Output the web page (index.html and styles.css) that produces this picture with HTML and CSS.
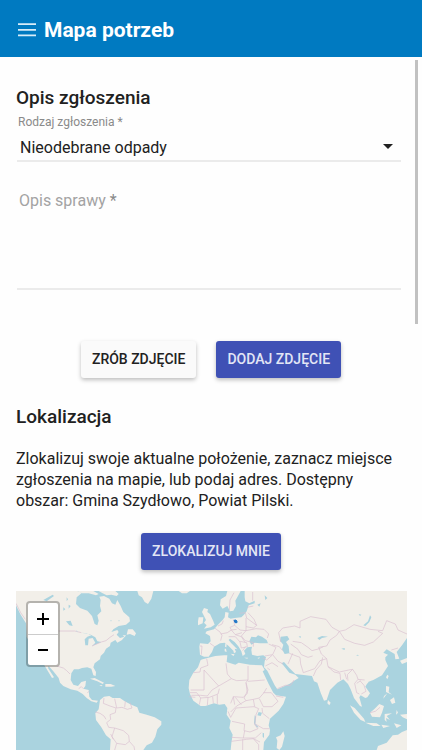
FILE: index.html
```html
<!DOCTYPE html>
<html lang="pl">
<head>
<meta charset="utf-8">
<meta name="viewport" content="width=device-width, initial-scale=1">
<title>Mapa potrzeb</title>
<link rel="stylesheet" href="styles.css">
</head>
<body>
<header class="topbar">
  <button class="menu" type="button" aria-label="Menu">
    <svg viewBox="0 0 18 14" width="18" height="14"><path d="M0 1.2H18M0 6.8H18M0 12.4H18"/></svg>
  </button>
  <div class="brand">Mapa potrzeb</div>
</header>
<div class="viewport">
<main class="content">
  <h2>Opis zgłoszenia</h2>
  <div class="field">
    <label class="float-label" for="kind">Rodzaj zgłoszenia <span class="star">*</span></label>
    <div class="select-wrap">
      <select id="kind"><option>Nieodebrane odpady</option></select>
      <svg class="caret" viewBox="0 0 10 5" width="10" height="5"><path d="M0 0H10L5 5Z"/></svg>
    </div>
  </div>
  <div class="field area">
    <textarea id="desc"></textarea>
    <label class="area-label" for="desc">Opis sprawy <span class="star">*</span></label>
  </div>
  <div class="actions pair">
    <button class="btn" type="button">ZRÓB ZDJĘCIE</button>
    <button class="btn primary" type="button">DODAJ ZDJĘCIE</button>
  </div>
  <h2>Lokalizacja</h2>
  <p>Zlokalizuj swoje aktualne położenie, zaznacz miejsce zgłoszenia na mapie, lub podaj adres. Dostępny obszar: Gmina Szydłowo, Powiat Pilski.</p>
  <div class="actions">
    <button class="btn primary" type="button">ZLOKALIZUJ MNIE</button>
  </div>
  <div class="map">
    <svg class="world" viewBox="48 33 1173 477" preserveAspectRatio="xMinYMin slice" aria-hidden="true">
      <g class="land">
        <!-- North and Central America -->
        <path d="M48 33H232L246 38L230 52L228 72L240 84L262 92L276 108L284 132L292 136L296 122L292 106L304 94L300 78L302 60L298 50L312 48L328 56L336 70L346 74L352 60L362 78L370 96L388 112L390 124L378 134L356 138L340 148L334 156L352 150L356 156L350 164L360 174L374 170L366 180L352 188L346 180L332 188L330 198L318 206L312 218L302 228L300 238L284 250L280 262L288 276L287 288L280 286L274 266L262 262L246 264L236 268L222 268L214 280L212 300L220 314L234 318L244 306L258 302L256 318L250 326L266 330L268 350L276 360L294 362L290 368L274 364L260 354L248 342L232 332L212 328L190 318L180 308L176 294L160 274L146 258L144 264L162 292L156 294L138 264L124 240L100 210L80 170L78 130L62 104L48 76Z"/>
        <path d="M232 33H280L296 42L288 46L266 40L246 40ZM296 33H346L356 42L350 48L334 44L320 46L308 40ZM384 148L398 148L408 160L404 168L390 162L380 164ZM368 166L378 166L374 172Z"/>
        <path d="M412 33H460L454 56L444 72L434 66L426 52L416 46ZM536 33H570L560 40L546 40Z"/>
        <path d="M270 296L284 294L300 302L312 308L308 312L292 304ZM316 312L332 312L346 318L334 320L316 320ZM298 315L308 316L304 319Z"/>
        <!-- South America -->
        <path d="M300 360L312 350L328 348L338 354L360 354L374 364L394 374L412 382L418 398L440 404L464 412L484 424L484 434L472 448L466 470L456 488L440 496L430 510H330L332 478L318 466L304 442L288 420L286 400L296 388Z"/>
        <!-- Africa -->
        <path d="M608 238L622 234L646 228L672 226L682 226L680 246L706 254L716 248L750 254L786 256L794 270L788 274L806 312L820 338L828 346L858 350L850 372L836 392L810 416L806 436L810 450L808 464L792 486L790 510H692L694 490L698 464L688 444L692 422L680 404L682 384L674 372L658 374L642 370L616 378L602 378L580 362L570 342L566 324L568 300L580 278L594 262L602 240Z"/>
        <path d="M850 454L854 468L846 500L838 510L830 504L832 482L828 472L842 466Z"/>
        <!-- Europe and Asia -->
        <path d="M682 33L678 48L662 58L660 76L668 86L682 78L690 94L700 92L708 78L706 62L716 44L722 33H734L734 52L736 64L748 70L764 62L764 70L746 76L740 94L732 104L724 112L704 114L692 116L684 112L686 98L676 96L674 112L668 120L656 132L642 148L620 154L616 160L630 168L632 184L624 192L600 190L598 200L600 224L612 230L626 230L636 216L642 200L660 190L674 188L686 198L700 212L702 220L708 216L704 206L712 208L694 190L686 180L690 176L704 186L716 200L724 214L728 228L736 222L732 212L742 202L756 200L754 210L756 224L772 228L790 226L798 232L794 244L792 262L802 272L810 288L824 316L832 328L846 322L868 312L886 300L896 294L886 284L868 278L850 256L844 250L852 246L868 264L886 282L936 288L942 304L952 308L962 338L972 362L980 360L990 330L1012 308L1030 298L1044 312L1052 328L1062 354L1080 378L1086 380L1078 352L1082 346L1096 354L1102 352L1110 340L1096 320L1104 306L1120 300L1146 286L1164 258L1156 240L1156 232L1164 224L1150 218L1160 208L1170 214L1184 222L1186 238L1198 236L1190 216L1206 196L1221 174V33Z"/>
        <path d="M612 84L624 88L622 96L630 102L640 124L644 134L632 142L612 146L620 136L612 128L618 120L606 96ZM596 112L610 112L608 130L594 136L594 124Z"/>
        <path d="M674 206L678 206L680 216L674 214ZM676 190L680 192L679 202L675 200ZM692 221L704 223L700 228ZM732 233L744 233L742 236ZM772 234L780 232L777 236Z"/>
        <path d="M984 360L992 368L988 376L982 370ZM1162 284L1166 288L1162 298L1158 292ZM1098 304L1106 306L1100 312Z"/>
        <path d="M1050 376L1064 384L1092 416L1096 426L1082 420L1062 398ZM1096 428L1130 430L1142 438L1120 438ZM1144 434L1170 438L1150 444ZM1110 398L1124 386L1138 372L1152 378L1146 398L1140 412L1116 410ZM1154 402L1176 400L1160 408L1170 420L1158 414L1160 426L1154 420ZM1158 318L1168 320L1166 336L1176 344L1158 336ZM1170 360L1182 352L1186 368L1176 372ZM1200 404L1221 402V418L1208 412Z"/>
        <path d="M1130 510L1134 498L1160 488L1178 466L1194 464L1206 456L1221 450V510ZM1200 242L1221 234V246L1206 252ZM1182 430L1204 436L1190 444ZM1162 340L1150 356L1152 348ZM1190 390L1194 398L1188 404Z"/>
      </g>
      <g class="water">
        <path d="M244 158L260 160L274 166L262 170L254 178L256 196L264 196L266 176L278 174L286 188L276 198L304 186L292 184L286 172L268 162ZM198 124L212 122L218 138L208 136ZM130 60L158 44L162 48L140 64ZM206 74L212 78L206 86ZM190 82L196 88L190 92ZM200 52L204 58L200 64Z"/>
        <path d="M754 170L768 172L774 166L786 170L800 180L804 190L780 190L764 188L754 194L748 184ZM842 170L862 168L868 178L858 186L866 198L868 220L854 222L846 208L850 194L840 182ZM772 74L782 70L778 80ZM794 46L802 54L796 60ZM776 396L786 398L782 408L772 406ZM764 406L768 410L766 432L776 442L770 442L762 430ZM788 458L792 460L792 474L788 470Z"/>
        <path d="M1090 136L1104 124L1110 106L1114 112L1108 126L1096 138ZM952 174L966 168L984 170L966 174L958 180ZM1024 206L1034 204L1034 210ZM1068 226L1074 224L1076 228ZM896 170L902 168L902 174ZM1076 102L1084 104L1080 108Z"/>
      </g>
      <g class="borders">
        <path d="M176 153H224L244 158M276 198L304 186L318 182L330 172L342 164M48 70L62 98L76 118M170 258L190 264L200 272L210 282M236 326L244 320L250 326M262 338L268 334M312 354L310 370L330 378L348 384L346 398L330 404L332 418L320 428L326 442L344 444M286 396L300 400L312 408L318 418M344 356L350 384L366 382L382 388L396 384L390 368M376 364L374 382M344 444L336 470L350 490L344 510M344 444L370 452L386 466L388 484L376 494L350 490M388 484L402 500L404 510M332 462L340 478"/>
        <path d="M620 236L624 256L602 264L600 276L580 278M612 270L612 330L572 330M612 270L656 318L636 330L622 348L602 346L574 346M656 318L694 296L682 282L678 250M694 296L710 302L744 300V258M744 300L738 308L742 340L730 352L700 350L692 370M744 304L794 300M738 308L744 330L732 354L738 362L760 358L778 354L792 338L800 324M790 338L814 338L834 364L816 380L790 380L778 356M570 338H590L602 354L628 352L654 342L658 326M602 354L598 374M624 352L622 376M638 350L640 370M652 344V372M700 350L704 374M692 396L710 378L738 362M684 394L692 412L708 384L762 380L776 386L768 404L764 434L774 446L750 456L732 452L734 432L696 424M694 472L730 474L734 452M730 474L766 474L784 458M694 484L740 478L760 476L780 486M728 478V510M760 476L776 494V510M786 384L788 400L808 416M766 432L790 446L808 446M568 350L586 352M706 352L724 374M760 358L764 380M828 348L850 352"/>
        <path d="M600 198H606L604 224M630 190L644 200M654 138L666 132L670 122M644 144L660 156L666 166L662 182M662 162L682 158L694 150L710 148M700 118L704 136L690 142L694 150M704 136L720 150L738 152V114M688 90L690 60L702 38M718 100L736 98L740 114L770 136L760 144L738 140M738 152L768 146L792 148L806 162L802 174M738 152L724 168L736 182L760 188M694 150L706 164L726 158M686 170L706 170L720 186L724 204M706 164L724 170M720 184L740 188L742 200L724 204M760 188L760 200M724 170L736 188M736 200L728 212M744 98L762 118L770 136M758 36V62M742 82L760 78M794 228L818 224L828 202L806 192M818 224L834 244L850 252M788 234L800 240L816 226M796 258L816 248L834 260M802 264L810 270M832 326L856 316L872 316L882 300M816 194L838 200L848 212M842 186L836 158L848 144L884 138L900 144V124L932 110L978 118L996 142L1018 154L1036 150L1062 134L1110 148L1148 152L1160 122L1186 132L1194 150L1221 162"/>
        <path d="M1018 154L1034 178L1064 190L1094 196L1120 186L1148 160L1134 154M1018 154L1010 166L990 180L980 198L956 202L964 222L980 236L984 260L1018 276L1046 270L1058 268L1070 286L1074 298L1094 300M878 184L904 188L924 202L936 212L958 206L970 200M872 192L894 208L904 224L924 232L938 228M868 220L900 232L902 252L910 278L944 266L960 242L980 236M878 220L864 252M940 288L948 270L964 252L968 232M984 260L1002 276L1020 280L1022 300M1034 278L1040 298M1058 268L1042 284L1044 302M1074 298L1064 310L1070 338L1078 342M1080 302L1092 316L1098 334L1084 342M1110 398L1126 394L1140 382M1194 204L1174 210M1070 310L1082 302"/>
        <path class="lake" d="M228 152L236 156M330 122H376" stroke-dasharray="6 18"/>
      </g>
      <path class="area-mark" d="M702 121L708 120L711 124L711 128L705 128Z"/>
    </svg>
    <div class="zoom">
      <button type="button" aria-label="Przybliż"><svg viewBox="0 0 12 12" width="12" height="12"><path d="M0 6H12M6 0V12"/></svg></button>
      <button type="button" aria-label="Oddal"><svg viewBox="0 0 12 12" width="12" height="12"><path d="M1 6H11"/></svg></button>
    </div>
  </div>
</main>
<span class="scroll-thumb"></span>
</div>
</body>
</html>
```
FILE: styles.css
```css
* { box-sizing: border-box; }

body {
  margin: 0;
  height: 100vh;
  display: flex;
  flex-direction: column;
  background: #fefefe;
  color: #212121;
  font: 16px/21px Roboto, "Liberation Sans", sans-serif;
}

button, select, textarea { font: inherit; color: inherit; }

.topbar {
  flex: none;
  display: flex;
  align-items: center;
  gap: 8px;
  height: 57px;
  padding: 3px 18px 0;
  background: #007ac1;
  color: #fff;
}

.menu {
  display: flex;
  padding: 0;
  border: 0;
  background: none;
}

.menu path { stroke: #d8edf9; stroke-width: 1.8; }

.brand { font-size: 21px; line-height: 24px; font-weight: 700; }

.viewport {
  position: relative;
  flex: 1;
  min-height: 0;
  display: flex;
}

.content {
  flex: 1;
  display: flex;
  flex-direction: column;
  padding: 29px 16px 0;
  overflow-y: auto;
  scrollbar-width: none;
}

.content > * { flex-shrink: 0; }

.scroll-thumb {
  position: absolute;
  top: 3px;
  right: 4px;
  width: 3px;
  height: 264px;
  background: #c1c1c1;
}

h2 {
  margin: 0;
  font-size: 19px;
  line-height: 24px;
  font-weight: 500;
}

.field {
  margin: 0 5px 0 1px;
  border-bottom: 2px solid #ebebeb;
}

.float-label {
  display: block;
  padding: 4px 1px 0;
  font-size: 12px;
  line-height: 16px;
  color: #8a8a8a;
}

.select-wrap { position: relative; }

select {
  display: block;
  width: 100%;
  height: 30px;
  padding: 4px 3px 0;
  border: 0;
  background: none;
  appearance: none;
}

.caret {
  position: absolute;
  top: 14px;
  right: 8px;
  fill: #212121;
  pointer-events: none;
}

.area { position: relative; margin-top: 26px; }

textarea {
  display: block;
  width: 100%;
  height: 100px;
  padding: 2px;
  border: 0;
  background: none;
  resize: none;
}

.area-label {
  position: absolute;
  top: 2px;
  left: 2px;
  color: #a3a3a3;
}

.area-label .star { color: #8a8a8a; }

.actions { display: flex; justify-content: center; gap: 20px; }

.pair { margin: 51px 0 27px; }

.btn {
  height: 37px;
  padding: 0 11px;
  border: 0;
  border-radius: 3px;
  background: #fafafa;
  font-size: 14px;
  font-weight: 500;
  box-shadow: 0 2px 4px rgba(0, 0, 0, 0.26);
}

.primary { background: #3f51b5; color: #e3e6f5; }

p { margin: 19px 0 22px; }

.map {
  position: relative;
  flex: 1 0 159px;
  margin: 21px -1px 0 0;
  background: #aad3df;
  overflow: hidden;
}

.world { display: block; width: 100%; height: 100%; }

.land { fill: #f2efe9; }
.water { fill: #aad3df; }
.borders { fill: none; stroke: #d9bfd0; stroke-width: 2; stroke-linejoin: round; }
.borders .lake { stroke: #c5dde2; }
.area-mark { fill: #2277c8; stroke: #2277c8; stroke-width: 3; }

.zoom {
  position: absolute;
  top: 10px;
  left: 10px;
  border: 2px solid rgba(0, 0, 0, 0.25);
  border-radius: 4px;
  background: #fff;
  background-clip: padding-box;
}

.zoom button {
  display: grid;
  place-items: center;
  width: 30px;
  height: 31px;
  padding: 0;
  border: 0;
  background: none;
}

.zoom button + button { border-top: 1px solid #ccc; }

.zoom path { stroke: #000; stroke-width: 2; }
```
